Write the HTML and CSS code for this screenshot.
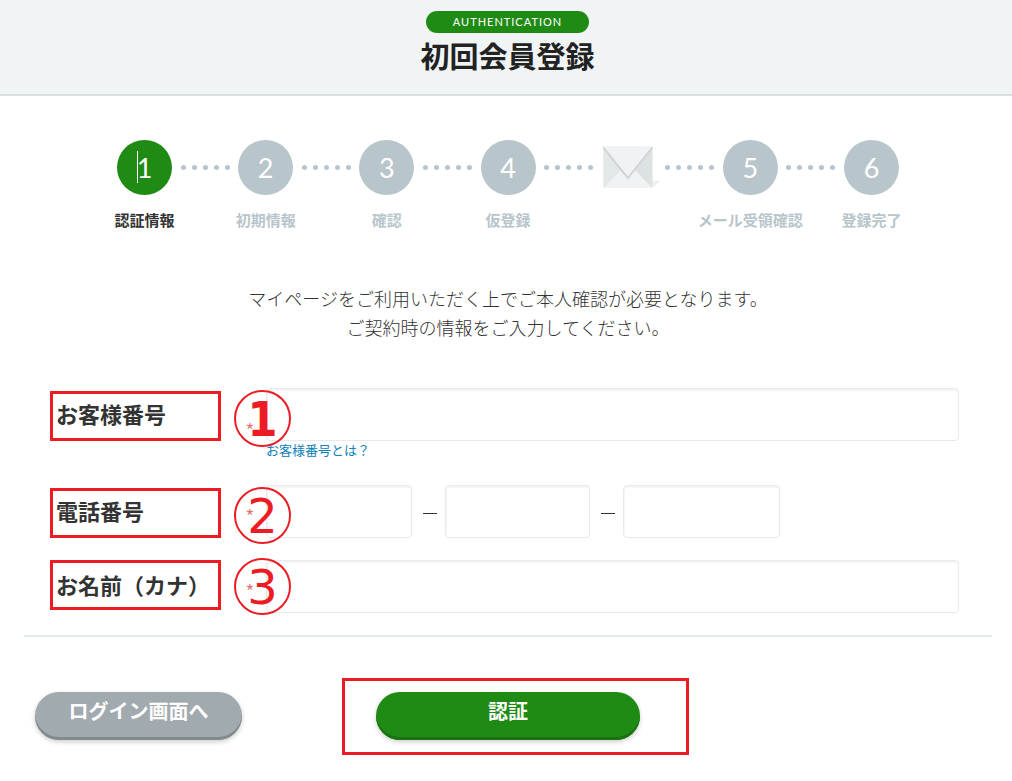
FILE: index.html
```html
<!DOCTYPE html>
<html lang="ja">

<head>
    <meta charset="UTF-8">
    <meta name="viewport" content="width=device-width, initial-scale=1.0">
    <title>初回会員登録</title>
    <link rel="stylesheet" href="styles.css">
</head>

<body>
    <header class="page-header">
        <span class="badge">AUTHENTICATION</span>
        <h1>初回会員登録</h1>
    </header>

    <main>
        <ol class="steps">
            <li class="step active"><span class="num">1<i class="caret"></i></span><span class="step-name">認証情報</span></li>
            <li class="dots" aria-hidden="true"><i></i><i></i><i></i><i></i><i></i></li>
            <li class="step"><span class="num">2</span><span class="step-name">初期情報</span></li>
            <li class="dots" aria-hidden="true"><i></i><i></i><i></i><i></i><i></i></li>
            <li class="step"><span class="num">3</span><span class="step-name">確認</span></li>
            <li class="dots" aria-hidden="true"><i></i><i></i><i></i><i></i><i></i></li>
            <li class="step"><span class="num">4</span><span class="step-name">仮登録</span></li>
            <li class="dots" aria-hidden="true"><i></i><i></i><i></i><i></i><i></i></li>
            <li class="step mail">
                <svg width="62" height="43" viewBox="0 0 60 42">
                    <path d="M49 34h8l-8 7z" fill="#efefef"/>
                    <path d="M1 0h48v41H1z" fill="#f1f2f4"/>
                    <path d="M1 1v40l20-20z" fill="#e2e8e7"/>
                    <path d="M49 1v40L29 21z" fill="#dce2e1"/>
                    <path d="M1 41l17-17 7 8 7-8 17 17z" fill="#f1f2f4"/>
                    <path d="M1 1l24 31L49 1v2L25 33 1 3z" fill="#d4d6d7"/>
                    <path d="M1 1h48L25 32z" fill="#cbcdce"/>
                    <path d="M1 0h48L25 30z" fill="#f1f2f4"/>
                </svg>
            </li>
            <li class="dots" aria-hidden="true"><i></i><i></i><i></i><i></i><i></i></li>
            <li class="step"><span class="num">5</span><span class="step-name">メール受領確認</span></li>
            <li class="dots" aria-hidden="true"><i></i><i></i><i></i><i></i><i></i></li>
            <li class="step"><span class="num">6</span><span class="step-name">登録完了</span></li>
        </ol>

        <p class="lead">マイページをご利用いただく上でご本人確認が必要となります。<br>ご契約時の情報をご入力してください。</p>

        <form>
            <div class="row">
                <label class="name" for="customer">お客様番号</label>
                <span class="required">*</span>
                <div class="field">
                    <input type="text" id="customer">
                    <a class="help" href="#">お客様番号とは？</a>
                </div>
                <span class="marker bold">1</span>
            </div>
            <div class="row">
                <label class="name" for="tel1">電話番号</label>
                <span class="required">*</span>
                <div class="field tel">
                    <input type="tel" id="tel1">
                    <span class="dash"></span>
                    <input type="tel" id="tel2" aria-label="電話番号 市内局番">
                    <span class="dash"></span>
                    <input type="tel" id="tel3" aria-label="電話番号 加入者番号">
                </div>
                <span class="marker">2</span>
            </div>
            <div class="row kana">
                <label class="name" for="kana">お名前（カナ）</label>
                <span class="required">*</span>
                <div class="field">
                    <input type="text" id="kana">
                </div>
                <span class="marker">3</span>
            </div>

            <div class="actions">
                <button type="button" class="btn back">ログイン画面へ</button>
                <div class="highlight">
                    <button type="submit" class="btn submit">認証</button>
                </div>
            </div>
        </form>
    </main>
</body>

</html>
```
FILE: styles.css
```css
* {
    box-sizing: border-box;
}

body {
    margin: 0;
    background-color: #fff;
    color: #333;
    font-family: Lato, "Noto Sans CJK JP", sans-serif;
}

.page-header {
    display: flex;
    flex-direction: column;
    align-items: center;
    padding: 11px 0 17px 3px;
    background-color: #f0f4f5;
    border-bottom: 2px solid #dadfe4;
}

.badge {
    padding: 0 27px;
    border-radius: 11px;
    background-color: #1f8b14;
    color: #fff;
    font-size: 11px;
    line-height: 22px;
    letter-spacing: 1px;
}

h1 {
    margin: 3px 0 0;
    color: #222;
    font-size: 29px;
    line-height: 41px;
}

main {
    padding: 44px 20px 24px 24px;
}

/* steps */
.steps {
    display: flex;
    max-width: 782px;
    margin: 0 auto;
    padding: 0;
    list-style: none;
}

.step {
    display: flex;
    flex-direction: column;
    align-items: center;
    flex: none;
    width: 55px;
    color: #b8c5cb;
}

.num {
    position: relative;
    width: 55px;
    height: 55px;
    border-radius: 50%;
    background-color: #b8c5cb;
    color: #fff;
    font-size: 27px;
    line-height: 55px;
    text-align: center;
}

.step-name {
    margin-top: 14px;
    font-size: 15px;
    font-weight: bold;
    line-height: 22px;
    white-space: nowrap;
}

.active {
    color: #333;
}

.active .num {
    background-color: #1f8b14;
}

.caret {
    position: absolute;
    top: 11px;
    left: 20px;
    width: 1px;
    height: 32px;
    background-color: #fff;
}

.mail svg {
    margin: 6px 0 0 8px;
}

.dots {
    display: flex;
    flex: 1;
    justify-content: center;
    align-items: center;
    gap: 6px;
    height: 55px;
}

.dots i {
    width: 5px;
    height: 5px;
    border-radius: 50%;
    background-color: #b8c5cf;
}

.lead {
    margin: 54px 0 45px;
    font-size: 18px;
    font-weight: 300;
    line-height: 29px;
    text-align: center;
}

/* form */
.row {
    position: relative;
    display: grid;
    grid-template-columns: 171px 45px 1fr;
    align-items: start;
    margin-bottom: 22px;
    padding: 0 33px 0 26px;
}

.name {
    height: 50px;
    margin-top: 3px;
    padding-left: 3px;
    border: 3px solid #ed1c24;
    font-size: 22px;
    font-weight: bold;
    line-height: 42px;
}

.required {
    align-self: center;
    padding: 8px 0 0 24px;
    color: #e0706c;
    font-family: "Noto Sans CJK JP", sans-serif;
    font-size: 22px;
    font-weight: 300;
    line-height: 24px;
}

.field input {
    display: block;
    width: 100%;
    height: 53px;
    padding: 0 10px;
    border: 1px solid #e6eaed;
    border-radius: 4px;
    background-color: #fff;
    box-shadow: inset 1px 2px 0 #f4f5f6;
    font: inherit;
    font-size: 18px;
}

.help {
    display: block;
    margin-bottom: 4px;
    color: #0f7fb8;
    font-size: 13px;
    line-height: 18px;
    text-decoration: none;
}

.tel {
    display: flex;
    align-items: center;
}

.field.tel input {
    flex: none;
    width: 21%;
}

.field.tel input:last-child {
    width: 157px;
}

.dash {
    width: 14px;
    height: 1px;
    margin: 3px 8px 0 11px;
    background-color: #333;
}

/* circled numbers over the fields */
.marker {
    position: absolute;
    top: 2px;
    left: 210px;
    width: 57px;
    height: 57px;
    border: 2px solid #ed1c24;
    border-radius: 50%;
    color: #ed1c24;
    font-family: "DejaVu Sans", sans-serif;
    font-size: 48px;
    line-height: 54px;
    text-align: center;
}

.marker.bold {
    font-family: "DejaVu Sans Condensed", "DejaVu Sans", sans-serif;
    font-weight: bold;
}

.kana .name {
    margin-top: 0;
    line-height: 46px;
}

.kana .marker {
    top: -2px;
}

.actions {
    display: flex;
    align-items: flex-start;
    padding: 41px 11px 0;
    border-top: 2px solid #e5eaed;
}

.btn {
    display: block;
    height: 48px;
    padding: 0 0 10px;
    border: 0;
    border-radius: 24px;
    color: #fff;
    font-family: inherit;
    font-size: 20px;
    font-weight: bold;
    line-height: 38px;
}

.back {
    width: 207px;
    margin-top: 14px;
    background-color: #a1aaaf;
    box-shadow: inset 0 -3px 0 #828a8c, 0 2px 5px rgba(0, 0, 0, 0.2);
}

.submit {
    width: 264px;
    background-color: #1f8b14;
    box-shadow: inset 0 -3px 0 #18720f, 0 2px 5px rgba(0, 0, 0, 0.2);
}

.highlight {
    margin-left: 100px;
    padding: 11px 46px 12px 31px;
    border: 3px solid #ed1c24;
}
```
